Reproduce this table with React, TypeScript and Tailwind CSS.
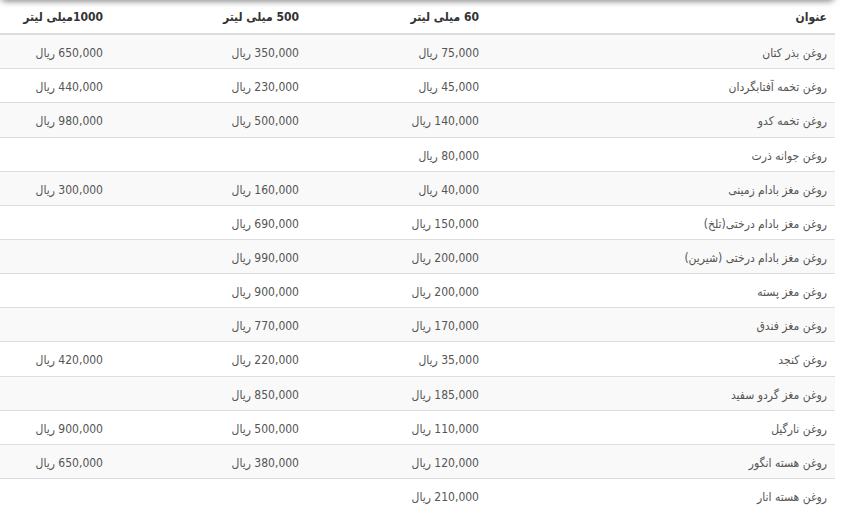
import React from 'react';

type Row = {
  title: string;
  ml60: string;
  ml500?: string;
  ml1000?: string;
};

const rows: Row[] = [
  { title: 'روغن بذر کتان', ml60: '75,000', ml500: '350,000', ml1000: '650,000' },
  { title: 'روغن تخمه آفتابگردان', ml60: '45,000', ml500: '230,000', ml1000: '440,000' },
  { title: 'روغن تخمه کدو', ml60: '140,000', ml500: '500,000', ml1000: '980,000' },
  { title: 'روغن جوانه ذرت', ml60: '80,000' },
  { title: 'روغن مغز بادام زمینی', ml60: '40,000', ml500: '160,000', ml1000: '300,000' },
  { title: 'روغن مغز بادام درختی(تلخ)', ml60: '150,000', ml500: '690,000' },
  { title: 'روغن مغز بادام درختی (شیرین)', ml60: '200,000', ml500: '990,000' },
  { title: 'روغن مغز پسته', ml60: '200,000', ml500: '900,000' },
  { title: 'روغن مغز فندق', ml60: '170,000', ml500: '770,000' },
  { title: 'روغن کنجد', ml60: '35,000', ml500: '220,000', ml1000: '420,000' },
  { title: 'روغن مغز گردو سفید', ml60: '185,000', ml500: '850,000' },
  { title: 'روغن نارگیل', ml60: '110,000', ml500: '500,000', ml1000: '900,000' },
  { title: 'روغن هسته انگور', ml60: '120,000', ml500: '380,000', ml1000: '650,000' },
  { title: 'روغن هسته انار', ml60: '210,000' },
];

const price = (v?: string) => (v ? `${v} ریال` : '');

const App: React.FC = () => {
  return (
    <div
      className="relative w-[847px] h-[509px] overflow-hidden bg-white text-[12px] leading-[1.42857] text-[#555]"
      style={{ fontFamily: '"DejaVu Sans Condensed", "DejaVu Sans", sans-serif' }}
    >
      {/* shadow from the bar above */}
      <div className="absolute left-0 top-[-6px] w-[835px] h-[6px] rounded-b-[6px] shadow-[0_1px_6px_rgba(0,0,0,0.55)] bg-white z-10" />

      <table dir="rtl" className="w-[835px] border-collapse table-fixed">
        <colgroup>
          <col className="w-[348px]" />
          <col className="w-[180px]" />
          <col className="w-[196px]" />
          <col className="w-[111px]" />
        </colgroup>
        <thead>
          <tr className="text-[#333] font-bold">
            <th className="px-2 pt-[9px] pb-[7px] text-right border-b-2 border-[#ddd]">عنوان</th>
            <th className="px-2 pt-[9px] pb-[7px] text-right border-b-2 border-[#ddd]">60 میلی لیتر</th>
            <th className="px-2 pt-[9px] pb-[7px] text-right border-b-2 border-[#ddd]">500 میلی لیتر</th>
            <th className="px-2 pt-[9px] pb-[7px] text-right border-b-2 border-[#ddd]">1000میلی لیتر</th>
          </tr>
        </thead>
        <tbody>
          {rows.map((r, i) => (
            <tr key={r.title} className={i % 2 === 0 ? 'bg-[#f9f9f9]' : 'bg-white'}>
              <td className="px-2 pt-[10px] pb-[6px] text-right border-t border-[#ddd]">{r.title}</td>
              <td className="px-2 pt-[10px] pb-[6px] text-right border-t border-[#ddd]">{price(r.ml60)}</td>
              <td className="px-2 pt-[10px] pb-[6px] text-right border-t border-[#ddd]">{price(r.ml500)}</td>
              <td className="px-2 pt-[10px] pb-[6px] text-right border-t border-[#ddd]">{price(r.ml1000)}</td>
            </tr>
          ))}
        </tbody>
      </table>
    </div>
  );
};

export default App;
